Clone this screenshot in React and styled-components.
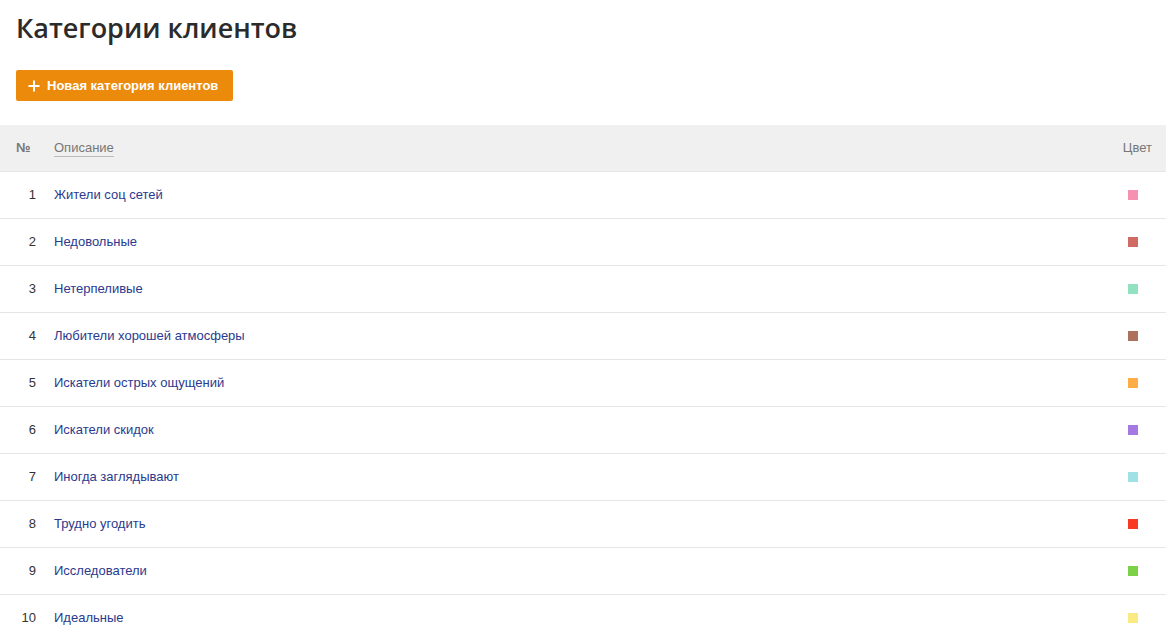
import React from "react";
import styled, { createGlobalStyle } from "styled-components";

const GlobalStyle = createGlobalStyle`
  body {
    margin: 0;
    background: #fff;
    font-family: "Open Sans", "Liberation Sans", sans-serif;
  }
`;

const Page = styled.div`
  display: flex;
  flex-direction: column;
`;

const Title = styled.h1`
  margin: 12px 16px 0;
  font-family: "Open Sans", sans-serif;
  font-size: 27px;
  font-weight: 600;
  line-height: 32px;
  color: #2b2b2b;
`;

const AddButton = styled.button`
  align-self: flex-start;
  display: flex;
  align-items: center;
  gap: 7px;
  margin: 26px 16px 24px;
  height: 31px;
  padding: 0 15px 0 12px;
  background: #eb8a0b;
  color: #fff;
  border: none;
  border-radius: 2px;
  font-family: "Liberation Sans", Arial, sans-serif;
  font-size: 13px;
  font-weight: 700;
  cursor: pointer;
`;

const Table = styled.table`
  width: 100%;
  table-layout: fixed;
  border-collapse: collapse;
  font-family: "Liberation Sans", Arial, sans-serif;
  font-size: 13px;
`;

const Col = styled.col`
  width: ${(p) => p.$width || "auto"};
`;

const HeadRow = styled.tr`
  background: #f0f0f0;
  height: 46px;
`;

const Th = styled.th`
  padding: 0 ${(p) => p.$pr || "0"} 0 ${(p) => p.$pl || "0"};
  font-weight: ${(p) => (p.$bold ? 700 : 400)};
  color: #777;
  text-align: ${(p) => p.$align || "left"};
`;

const SortLabel = styled.span`
  border-bottom: 1px solid #bbb;
  padding-bottom: 1px;
`;

const Row = styled.tr`
  height: 47px;
  border-top: 1px solid #e6e6e6;
`;

const NumCell = styled.td`
  text-align: right;
  padding: 0;
  color: #333;
`;

const DescCell = styled.td`
  padding: 0 0 0 18px;
  color: #2a3a8e;
`;

const ColorCell = styled.td`
  padding: 0 28px 0 0;
`;

const Swatch = styled.div`
  margin-left: auto;
  width: 10px;
  height: 10px;
  background: ${(p) => p.$color};
`;

const PlusIcon = () => (
  <svg width="12" height="12" viewBox="0 0 12 12">
    <path d="M6 0.5v11M0.5 6h11" stroke="#fff" strokeWidth="2" />
  </svg>
);

const categories = [
  { id: 1, name: "Жители соц сетей", color: "#f691b2" },
  { id: 2, name: "Недовольные", color: "#d06b64" },
  { id: 3, name: "Нетерпеливые", color: "#92e1c0" },
  { id: 4, name: "Любители хорошей атмосферы", color: "#ac725e" },
  { id: 5, name: "Искатели острых ощущений", color: "#ffad46" },
  { id: 6, name: "Искатели скидок", color: "#a47ae2" },
  { id: 7, name: "Иногда заглядывают", color: "#9fe1e7" },
  { id: 8, name: "Трудно угодить", color: "#f83a22" },
  { id: 9, name: "Исследователи", color: "#7bd148" },
  { id: 10, name: "Идеальные", color: "#fbe983" },
];

const App = () => {
  return (
    <Page>
      <GlobalStyle />
      <Title>Категории клиентов</Title>
      <AddButton>
        <PlusIcon />
        Новая категория клиентов
      </AddButton>
      <Table>
        <colgroup>
          <Col $width="36px" />
          <Col />
          <Col $width="80px" />
        </colgroup>
        <thead>
          <HeadRow>
            <Th $pl="16px" $bold>№</Th>
            <Th $pl="18px">
              <SortLabel>Описание</SortLabel>
            </Th>
            <Th $align="right" $pr="14px">Цвет</Th>
          </HeadRow>
        </thead>
        <tbody>
          {categories.map((c) => (
            <Row key={c.id}>
              <NumCell>{c.id}</NumCell>
              <DescCell>{c.name}</DescCell>
              <ColorCell>
                <Swatch $color={c.color} />
              </ColorCell>
            </Row>
          ))}
        </tbody>
      </Table>
    </Page>
  );
};

export default App;
